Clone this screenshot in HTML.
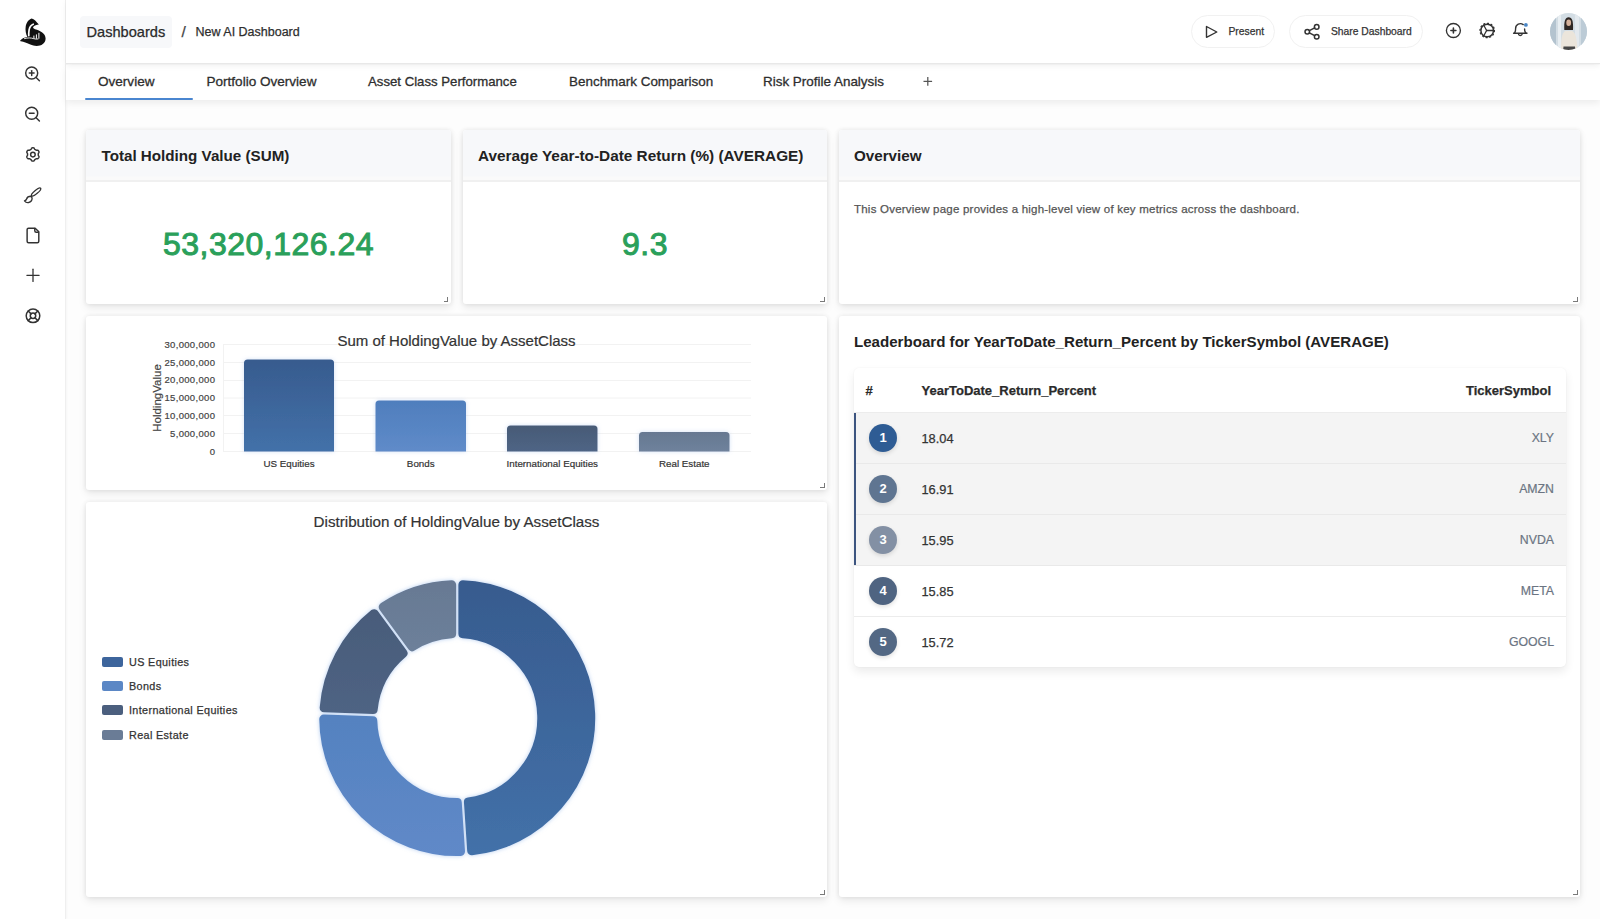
<!DOCTYPE html>
<html><head><meta charset="utf-8">
<style>
*{box-sizing:border-box;margin:0;padding:0}
html,body{width:1600px;height:919px;overflow:hidden;background:#fdfdfd;font-family:"Liberation Sans",sans-serif;color:#2a2a2a}
.abs{position:absolute}
#side{position:absolute;left:0;top:0;width:66px;height:919px;background:#fff;border-right:1px solid #efefef;box-shadow:1px 0 2px rgba(0,0,0,0.03)}
#hdr{position:absolute;left:66px;top:0;width:1534px;height:64px;background:#fff;border-bottom:1px solid #e8e8e8;box-shadow:0 2px 6px rgba(0,0,0,0.06);z-index:2}
#tabs{position:absolute;left:66px;top:65px;width:1534px;height:35px;background:#fff;box-shadow:0 3px 7px rgba(0,0,0,0.07);z-index:1}
.tab{position:absolute;top:74px;font-size:13.55px;color:#2e2e2e;-webkit-text-stroke:0.3px #2e2e2e;white-space:nowrap;line-height:16px}
.card{position:absolute;background:#fff;border-radius:3px;box-shadow:0 4px 8px rgba(0,0,0,0.08),0 0 5px rgba(0,0,0,0.09)}
.chd{position:absolute;left:0;top:0;right:0;height:52px;background:linear-gradient(#f7f8fa 0,#f7f8fa 46px,#fafafa 47px,#fafafa 49.5px,#f0f0f0 50.5px,#f0f0f0 51.5px,#fff 52px);border-radius:3px 3px 0 0}
.ctitle{position:absolute;font-weight:bold;font-size:15.2px;color:#222;white-space:nowrap;line-height:18px}
.big{position:absolute;font-weight:normal;-webkit-text-stroke:1px #2aa05a;font-size:32px;letter-spacing:0.5px;text-indent:0.5px;color:#2aa05a;white-space:nowrap;line-height:36px;text-align:center}
.rh{position:absolute;width:4.5px;height:4.5px;border-right:1.1px solid #7a7a7a;border-bottom:1.1px solid #7a7a7a}
.txt{position:absolute;white-space:nowrap;-webkit-text-stroke:0.25px currentColor}
.lbc{position:absolute;left:869px;width:28px;height:28px;border-radius:50%;color:#fff;font-weight:bold;font-size:13px;line-height:28px;text-align:center;box-shadow:0 2px 4px rgba(0,0,0,0.12)}
.lbv{position:absolute;left:921.5px;font-size:12.8px;line-height:15px;color:#333;white-space:nowrap;-webkit-text-stroke:0.25px #333}
.lbt{position:absolute;right:46px;font-size:12.3px;line-height:15px;color:#6b7482;white-space:nowrap;text-align:right;-webkit-text-stroke:0.2px #6b7482}
body > div:not(#hdr):not(#tabs):not(#side){z-index:4}
</style></head><body>
<div id="side"></div>
<div id="hdr"></div>
<div id="tabs"></div>
<div class="abs" style="left:85px;top:98px;width:108px;height:2px;background:#4a86d0;border-radius:1px"></div>

<!-- header breadcrumb -->
<div class="abs" style="left:80px;top:16px;width:92px;height:32px;background:#f7f8fa;border-radius:4px"></div>
<div class="txt" style="left:86.5px;top:24px;font-size:14.6px;line-height:17px;color:#2a2a2a">Dashboards</div>
<div class="txt" style="left:181.5px;top:23px;font-size:15.5px;line-height:18px;color:#444">/</div>
<div class="txt" style="left:195.5px;top:24px;font-size:12.5px;line-height:16px;color:#2e2e2e">New AI Dashboard</div>

<!-- tabs -->
<div class="tab" style="left:98px">Overview</div>
<div class="tab" style="left:206.5px">Portfolio Overview</div>
<div class="tab" style="left:368px;font-size:13.2px">Asset Class Performance</div>
<div class="tab" style="left:569px;font-size:13.45px">Benchmark Comparison</div>
<div class="tab" style="left:763px;font-size:13.45px">Risk Profile Analysis</div>
<svg class="abs" style="left:920px;top:74px;z-index:5" width="16" height="16"><g stroke="#555" stroke-width="1.25"><line x1="3.5" y1="7.4" x2="12.1" y2="7.4"/><line x1="7.8" y1="3.1" x2="7.8" y2="11.7"/></g></svg>

<!-- header buttons -->
<div class="abs" style="left:1191px;top:15px;width:84px;height:33px;border:1px solid #f1f1f1;border-radius:17px;background:#fff"></div>
<div class="txt" style="left:1228.5px;top:25px;font-size:10.3px;line-height:13px;color:#333">Present</div>
<div class="abs" style="left:1289px;top:15px;width:134px;height:33px;border:1px solid #f1f1f1;border-radius:17px;background:#fff"></div>
<div class="txt" style="left:1331px;top:25px;font-size:10.3px;line-height:13px;color:#333">Share Dashboard</div>

<!-- Row 1 cards -->
<div class="card" style="left:86px;top:130px;width:364.5px;height:174px">
  <div class="chd"></div>
</div>
<div class="ctitle" style="left:101.5px;top:147px">Total Holding Value (SUM)</div>
<div class="big" style="left:86px;top:226px;width:364.5px">53,320,126.24</div>

<div class="card" style="left:462.5px;top:130px;width:364.5px;height:174px">
  <div class="chd"></div>
</div>
<div class="ctitle" style="left:478px;top:147px;font-size:15.35px">Average Year-to-Date Return (%) (AVERAGE)</div>
<div class="big" style="left:462.5px;top:226px;width:364.5px">9.3</div>

<div class="card" style="left:839px;top:130px;width:741px;height:174px">
  <div class="chd"></div>
</div>
<div class="ctitle" style="left:854px;top:147px">Overview</div>
<div class="txt" style="left:854px;top:202px;font-size:11.5px;letter-spacing:0.22px;line-height:14px;color:#555">This Overview page provides a high-level view of key metrics across the dashboard.</div>

<!-- Row 2 -->
<div class="card" style="left:86px;top:316px;width:741px;height:174px"></div>
<div class="card" style="left:839px;top:316px;width:741px;height:581px"></div>
<div class="card" style="left:86px;top:502px;width:741px;height:395px"></div>

<div class="rh" style="left:443.5px;top:297px"></div>
<div class="rh" style="left:820px;top:297px"></div>
<div class="rh" style="left:1573px;top:297px"></div>
<div class="rh" style="left:820px;top:483px"></div>
<div class="rh" style="left:820px;top:890px"></div>
<div class="rh" style="left:1573px;top:890px"></div>
<!-- ===== Leaderboard ===== -->
<div class="ctitle" style="left:854px;top:332.5px;font-size:15.1px">Leaderboard for YearToDate_Return_Percent by TickerSymbol (AVERAGE)</div>
<div class="abs" style="left:854px;top:368px;width:712px;height:299px;background:#fff;border-radius:5px;box-shadow:0 5px 10px rgba(0,0,0,0.08),0 0 2px rgba(0,0,0,0.06)"></div>
<div class="abs" style="left:854px;top:412px;width:712px;height:1px;background:#ececec"></div>
<div class="abs" style="left:854px;top:413px;width:712px;height:50px;background:#f4f4f4"></div>
<div class="abs" style="left:854px;top:463px;width:712px;height:1px;background:#e9e9e9"></div>
<div class="abs" style="left:854px;top:464px;width:712px;height:50px;background:#f4f4f4"></div>
<div class="abs" style="left:854px;top:514px;width:712px;height:1px;background:#e9e9e9"></div>
<div class="abs" style="left:854px;top:515px;width:712px;height:50px;background:#f4f4f4"></div>
<div class="abs" style="left:854px;top:565px;width:712px;height:1px;background:#e9e9e9"></div>
<div class="abs" style="left:854px;top:616px;width:712px;height:1px;background:#ececec"></div>
<div class="abs" style="left:854px;top:413px;width:2px;height:152px;background:#3d5580"></div>
<div class="txt" style="left:865.5px;top:383px;font-size:13px;font-weight:bold;line-height:15px;color:#2a2a2a">#</div>
<div class="txt" style="left:921.5px;top:383px;font-size:13px;font-weight:bold;line-height:15px;color:#2a2a2a">YearToDate_Return_Percent</div>
<div class="txt" style="left:1466px;top:383px;font-size:13px;font-weight:bold;line-height:15px;color:#2a2a2a">TickerSymbol</div>
<div class="lbc" style="top:424px;background:#2e5c94">1</div>
<div class="lbc" style="top:475px;background:#5f7591">2</div>
<div class="lbc" style="top:526px;background:#8390a4">3</div>
<div class="lbc" style="top:577px;background:#4f6481">4</div>
<div class="lbc" style="top:628px;background:#536884">5</div>
<div class="lbv" style="top:431px">18.04</div>
<div class="lbv" style="top:482px">16.91</div>
<div class="lbv" style="top:533px">15.95</div>
<div class="lbv" style="top:584px">15.85</div>
<div class="lbv" style="top:635px">15.72</div>
<div class="lbt" style="top:431px">XLY</div>
<div class="lbt" style="top:482px">AMZN</div>
<div class="lbt" style="top:533px">NVDA</div>
<div class="lbt" style="top:584px">META</div>
<div class="lbt" style="top:635px">GOOGL</div>

<svg class="abs" style="left:0;top:0;z-index:5" width="1600" height="919" viewBox="0 0 1600 919" font-family="Liberation Sans, sans-serif">
<defs>
  <linearGradient id="bUS" x1="0" y1="0" x2="0" y2="1"><stop offset="0" stop-color="#375b8e"/><stop offset="1" stop-color="#4371a9"/></linearGradient>
  <linearGradient id="bBo" x1="0" y1="0" x2="0" y2="1"><stop offset="0" stop-color="#4f7ebd"/><stop offset="1" stop-color="#5f8bc9"/></linearGradient>
  <linearGradient id="bIn" x1="0" y1="0" x2="0" y2="1"><stop offset="0" stop-color="#475a76"/><stop offset="1" stop-color="#4f6585"/></linearGradient>
  <linearGradient id="bRe" x1="0" y1="0" x2="0" y2="1"><stop offset="0" stop-color="#667891"/><stop offset="1" stop-color="#6f829c"/></linearGradient>
  <linearGradient id="gUS" gradientUnits="userSpaceOnUse" x1="457" y1="580" x2="457" y2="856"><stop offset="0" stop-color="#375b8e"/><stop offset="1" stop-color="#4371a9"/></linearGradient>
  <linearGradient id="gIn" gradientUnits="userSpaceOnUse" x1="457" y1="600" x2="457" y2="720"><stop offset="0" stop-color="#485b79"/><stop offset="1" stop-color="#4f6484"/></linearGradient>
  <linearGradient id="gRe" gradientUnits="userSpaceOnUse" x1="457" y1="580" x2="457" y2="650"><stop offset="0" stop-color="#677993"/><stop offset="1" stop-color="#6d809a"/></linearGradient>
  <linearGradient id="gBo" gradientUnits="userSpaceOnUse" x1="457" y1="718" x2="457" y2="856"><stop offset="0" stop-color="#5482c0"/><stop offset="1" stop-color="#6089c8"/></linearGradient>
  <filter id="glow" x="-20%" y="-20%" width="140%" height="140%"><feDropShadow dx="0" dy="0" stdDeviation="2.2" flood-color="#86aee6" flood-opacity="0.6"/></filter>
  <filter id="bglow" x="-20%" y="-20%" width="140%" height="140%"><feDropShadow dx="0" dy="0" stdDeviation="2" flood-color="#8fb0e6" flood-opacity="0.4"/></filter>
  <filter id="cshadow" x="-50%" y="-50%" width="200%" height="200%"><feDropShadow dx="0" dy="1" stdDeviation="1.5" flood-color="#000" flood-opacity="0.18"/></filter>
  <clipPath id="avc"><circle cx="1568.5" cy="31.5" r="18.5"/></clipPath>
</defs>

<!-- ===== Bar chart ===== -->
<g stroke="#f2f2f2" stroke-width="1">
  <line x1="223" y1="344.5" x2="751" y2="344.5"/>
  <line x1="223" y1="362.5" x2="751" y2="362.5"/>
  <line x1="223" y1="380.5" x2="751" y2="380.5"/>
  <line x1="223" y1="398" x2="751" y2="398"/>
  <line x1="223" y1="415.5" x2="751" y2="415.5"/>
  <line x1="223" y1="433.5" x2="751" y2="433.5"/>
  <line x1="223" y1="451.5" x2="751" y2="451.5"/>
  <line x1="223.5" y1="344" x2="223.5" y2="452"/>
</g>
<text x="456.5" y="345.6" font-size="15" text-anchor="middle" fill="#333" stroke="#333" stroke-width="0.2">Sum of HoldingValue by AssetClass</text>
<g font-size="9.5" fill="#444" text-anchor="end" letter-spacing="0.33" stroke="#444" stroke-width="0.2">
  <text x="215.3" y="347.8">30,000,000</text>
  <text x="215.3" y="365.6">25,000,000</text>
  <text x="215.3" y="383.4">20,000,000</text>
  <text x="215.3" y="401.2">15,000,000</text>
  <text x="215.3" y="419">10,000,000</text>
  <text x="215.3" y="436.8">5,000,000</text>
  <text x="215.3" y="454.6">0</text>
</g>
<text transform="translate(160.8,398) rotate(-90)" font-size="11.5" text-anchor="middle" fill="#444" stroke="#444" stroke-width="0.2">HoldingValue</text>
<g filter="url(#bglow)">
  <path d="M244 451.5 V363 a3.5 3.5 0 0 1 3.5 -3.5 H330.5 a3.5 3.5 0 0 1 3.5 3.5 V451.5 Z" fill="url(#bUS)"/>
  <path d="M375.5 451.5 V404 a3.5 3.5 0 0 1 3.5 -3.5 H462.5 a3.5 3.5 0 0 1 3.5 3.5 V451.5 Z" fill="url(#bBo)"/>
  <path d="M507 451.5 V429 a3.5 3.5 0 0 1 3.5 -3.5 H594 a3.5 3.5 0 0 1 3.5 3.5 V451.5 Z" fill="url(#bIn)"/>
  <path d="M639 451.5 V435.5 a3.5 3.5 0 0 1 3.5 -3.5 H726 a3.5 3.5 0 0 1 3.5 3.5 V451.5 Z" fill="url(#bRe)"/>
</g>
<g font-size="9.8" fill="#333" text-anchor="middle" transform="translate(0,-1)" stroke="#333" stroke-width="0.2">
  <text x="289" y="467.5">US Equities</text>
  <text x="420.75" y="467.5">Bonds</text>
  <text x="552.25" y="467.5">International Equities</text>
  <text x="684.25" y="467.5">Real Estate</text>
</g>

<!-- ===== Donut ===== -->
<text x="456.5" y="526.5" font-size="15.2" text-anchor="middle" fill="#333" stroke="#333" stroke-width="0.2">Distribution of HoldingValue by AssetClass</text>
<g filter="url(#glow)">
<path d="M462.85 584.72 A133.50 133.50 0 0 1 471.68 850.82 L468.42 801.86 A84.50 84.50 0 0 0 462.85 633.79 Z" fill="url(#gUS)" stroke="url(#gUS)" stroke-width="9" stroke-linejoin="round"/>
<path d="M460.50 851.56 A133.50 133.50 0 0 1 323.75 719.04 L372.79 720.75 A84.50 84.50 0 0 0 457.25 802.60 Z" fill="url(#gBo)" stroke="url(#gBo)" stroke-width="9" stroke-linejoin="round"/>
<path d="M324.14 707.85 A133.50 133.50 0 0 1 374.14 613.63 L403.05 653.27 A84.50 84.50 0 0 0 373.18 709.56 Z" fill="url(#gIn)" stroke="url(#gIn)" stroke-width="9" stroke-linejoin="round"/>
<path d="M383.18 607.03 A133.50 133.50 0 0 1 451.65 584.72 L451.65 633.79 A84.50 84.50 0 0 0 412.09 646.68 Z" fill="url(#gRe)" stroke="url(#gRe)" stroke-width="9" stroke-linejoin="round"/>
</g>
<g>
  <rect x="102" y="657" width="21" height="10" rx="2" fill="#3d659c"/>
  <rect x="102" y="681" width="21" height="10" rx="2" fill="#5b87c5"/>
  <rect x="102" y="705" width="21" height="10" rx="2" fill="#4b5f7e"/>
  <rect x="102" y="730" width="21" height="10" rx="2" fill="#6a7c96"/>
</g>
<g font-size="10.8" fill="#333" letter-spacing="0.36" stroke="#333" stroke-width="0.25">
  <text x="129" y="666">US Equities</text>
  <text x="129" y="690">Bonds</text>
  <text x="129" y="714.3">International Equities</text>
  <text x="129" y="738.5">Real Estate</text>
</g>
</svg>

<!-- ===== Icons ===== -->
<svg class="abs" style="left:0;top:0;z-index:5" width="1600" height="919" viewBox="0 0 1600 919">
<defs><clipPath id="avc"><circle cx="1568.5" cy="31.7" r="18.5"/></clipPath>
<linearGradient id="avbg" x1="0" y1="0" x2="1" y2="0"><stop offset="0" stop-color="#a9bccb"/><stop offset="0.5" stop-color="#dfe7ee"/><stop offset="1" stop-color="#b4c6d4"/></linearGradient></defs>
<!-- logo -->
<g>
<path d="M31.7 18.4 C34.2 18.6 36.2 21.6 38.9 24.6 C36.6 24.9 34.6 25.4 33.6 26.6 C32.6 27.6 33.1 28.6 35 29.2 C40.2 30.6 45.6 33.2 45.6 38.6 C45.6 43.6 41.2 46 36.6 46 C32.2 46 28.2 43.2 24.6 42.2 C22.6 41.6 21.2 41.6 19.9 41.1 C21.6 38.9 24 37.5 27.4 37.1 C25.9 34 25.1 30 25.7 26.5 C26.2 23 28.4 19.4 31.7 18.4 Z" fill="#111"/>
<path d="M33.2 24.2 C31 25 29.6 27.2 29.1 29.8 C28.7 32 28.7 33.8 28.8 35.6" stroke="#fff" stroke-width="1.7" fill="none" stroke-linecap="round"/>
<path d="M24.5 38.6 C28 37.6 31 37.8 33.5 38.6 C35 39.1 36.5 39.2 38 39" stroke="#fff" stroke-width="0.9" fill="none" stroke-linecap="round"/>
<g stroke="#fff" stroke-width="1" stroke-linecap="round"><line x1="36.4" y1="34.8" x2="36.4" y2="38.3"/><line x1="38.9" y1="33.2" x2="38.9" y2="38.3"/><line x1="33.9" y1="36" x2="33.9" y2="38.2"/></g>
</g>
<g fill="none" stroke="#333" stroke-width="1.45" stroke-linecap="round" stroke-linejoin="round">
  <!-- zoom in -->
  <circle cx="31.7" cy="73" r="6"/><line x1="36.1" y1="77.4" x2="39.4" y2="80.7"/><line x1="31.7" y1="70.6" x2="31.7" y2="75.4"/><line x1="29.3" y1="73" x2="34.1" y2="73"/>
  <!-- zoom out -->
  <circle cx="31.7" cy="113.3" r="6"/><line x1="36.1" y1="117.7" x2="39.4" y2="121"/><line x1="29.3" y1="113.3" x2="34.1" y2="113.3"/>
  <!-- gear -->
  <path d="M32.90 147.80 L33.13 147.81 L33.36 147.83 L33.59 147.87 L33.81 147.94 L34.03 148.06 L34.22 148.24 L34.38 148.50 L34.52 148.81 L34.65 149.07 L34.78 149.27 L34.93 149.42 L35.09 149.53 L35.25 149.63 L35.41 149.72 L35.57 149.82 L35.74 149.91 L35.90 150.00 L36.06 150.09 L36.24 150.17 L36.44 150.23 L36.68 150.25 L36.98 150.23 L37.31 150.19 L37.62 150.20 L37.87 150.28 L38.08 150.40 L38.25 150.56 L38.40 150.74 L38.54 150.93 L38.66 151.12 L38.77 151.33 L38.87 151.54 L38.94 151.76 L38.99 151.99 L39.00 152.23 L38.94 152.49 L38.79 152.76 L38.60 153.03 L38.43 153.27 L38.32 153.49 L38.27 153.69 L38.25 153.89 L38.25 154.08 L38.25 154.26 L38.25 154.45 L38.25 154.64 L38.25 154.82 L38.25 155.01 L38.27 155.21 L38.32 155.41 L38.43 155.63 L38.60 155.87 L38.79 156.14 L38.94 156.41 L39.00 156.67 L38.99 156.91 L38.94 157.14 L38.87 157.36 L38.77 157.57 L38.66 157.77 L38.54 157.97 L38.40 158.16 L38.25 158.34 L38.08 158.50 L37.87 158.62 L37.62 158.70 L37.31 158.71 L36.98 158.67 L36.68 158.65 L36.44 158.67 L36.24 158.73 L36.06 158.81 L35.90 158.90 L35.74 158.99 L35.57 159.08 L35.41 159.18 L35.25 159.27 L35.09 159.37 L34.93 159.48 L34.78 159.63 L34.65 159.83 L34.52 160.09 L34.38 160.40 L34.22 160.66 L34.03 160.84 L33.81 160.96 L33.59 161.03 L33.36 161.07 L33.13 161.09 L32.90 161.10 L32.67 161.09 L32.44 161.07 L32.21 161.03 L31.99 160.96 L31.77 160.84 L31.58 160.66 L31.42 160.40 L31.28 160.09 L31.15 159.83 L31.02 159.63 L30.87 159.48 L30.71 159.37 L30.55 159.27 L30.39 159.18 L30.22 159.08 L30.06 158.99 L29.90 158.90 L29.74 158.81 L29.56 158.73 L29.36 158.67 L29.12 158.65 L28.82 158.67 L28.49 158.71 L28.18 158.70 L27.93 158.62 L27.72 158.50 L27.55 158.34 L27.40 158.16 L27.26 157.97 L27.14 157.78 L27.03 157.57 L26.93 157.36 L26.86 157.14 L26.81 156.91 L26.80 156.67 L26.86 156.41 L27.01 156.14 L27.20 155.87 L27.37 155.63 L27.48 155.41 L27.53 155.21 L27.55 155.01 L27.55 154.82 L27.55 154.64 L27.55 154.45 L27.55 154.26 L27.55 154.08 L27.55 153.89 L27.53 153.69 L27.48 153.49 L27.37 153.27 L27.20 153.03 L27.01 152.76 L26.86 152.49 L26.80 152.23 L26.81 151.99 L26.86 151.76 L26.93 151.54 L27.03 151.33 L27.14 151.12 L27.26 150.93 L27.40 150.74 L27.55 150.56 L27.72 150.40 L27.93 150.28 L28.18 150.20 L28.49 150.19 L28.82 150.23 L29.12 150.25 L29.36 150.23 L29.56 150.17 L29.74 150.09 L29.90 150.00 L30.06 149.91 L30.22 149.82 L30.39 149.72 L30.55 149.63 L30.71 149.53 L30.87 149.42 L31.02 149.27 L31.15 149.07 L31.28 148.81 L31.42 148.50 L31.58 148.24 L31.77 148.06 L31.99 147.94 L32.21 147.87 L32.44 147.83 L32.67 147.81 Z" stroke-width="1.45"/>
  <circle cx="32.9" cy="154.6" r="2.3" stroke-width="1.45"/>
  <!-- brush -->
  <ellipse cx="36.1" cy="192" rx="5.9" ry="1.7" transform="rotate(-40 36.1 192)" stroke-width="1.35"/>
  <path d="M31.4 196.3 C29.2 196.2 27.1 197.2 26.6 199 C26.3 200 25.6 200.5 24.5 200.8 C25.6 202.3 27.1 202.8 28.6 202.5 C30.6 202 32.1 200.1 32.1 198.3 Z" stroke-width="1.35"/>
  <!-- file -->
  <g transform="translate(24.2,226.7) scale(0.73)" stroke-width="2">
    <path d="M15 2H6a2 2 0 0 0-2 2v16a2 2 0 0 0 2 2h12a2 2 0 0 0 2-2V7Z"/>
    <path d="M14.5 2.5v3a2 2 0 0 0 2 2h3"/>
  </g>
  <!-- plus -->
  <line x1="26.9" y1="275.3" x2="39.1" y2="275.3" stroke-width="1.3"/><line x1="33" y1="269.2" x2="33" y2="281.4" stroke-width="1.3"/>
  <!-- lifebuoy -->
  <g transform="translate(24.84,307.64) scale(0.68)" stroke-width="2.2">
    <circle cx="12" cy="12" r="10"/><circle cx="12" cy="12" r="4"/>
    <path d="m4.93 4.93 4.24 4.24"/><path d="m14.83 9.17 4.24-4.24"/><path d="m14.83 14.83 4.24 4.24"/><path d="m9.17 14.83-4.24 4.24"/>
  </g>
  <!-- play -->
  <path d="M1206.5 26.5 L1216.8 32 L1206.5 37.3 Z" stroke-width="1.4"/>
  <!-- share -->
  <circle cx="1307.3" cy="31.8" r="2.3" stroke-width="1.5"/><circle cx="1316.7" cy="26.9" r="2.3" stroke-width="1.5"/><circle cx="1316.7" cy="36.7" r="2.3" stroke-width="1.5"/>
  <line x1="1309.3" y1="30.7" x2="1314.7" y2="27.9" stroke-width="1.5"/><line x1="1309.3" y1="32.9" x2="1314.7" y2="35.7" stroke-width="1.5"/>
  <!-- plus circle -->
  <circle cx="1453.4" cy="30.5" r="7" stroke-width="1.35"/><line x1="1450.9" y1="30.5" x2="1455.9" y2="30.5" stroke-width="1.6"/><line x1="1453.4" y1="28" x2="1453.4" y2="33" stroke-width="1.6"/>
  <!-- cog/chrome -->
  <circle cx="1487.2" cy="30.5" r="6.3" stroke-width="1.5"/>
  <circle cx="1487.2" cy="30.5" r="7.2" stroke-width="1.3" stroke-dasharray="1.1 2.67"/>
  <line x1="1486.6" y1="30.5" x2="1493.5" y2="30.5" stroke-width="1.3"/><line x1="1486.6" y1="30.5" x2="1483.8" y2="25.3" stroke-width="1.3"/><line x1="1486.6" y1="30.5" x2="1483.8" y2="35.7" stroke-width="1.3"/>
  <!-- bell -->
  <path d="M1515.6 28.5 a4.8 4.8 0 0 1 7.6 -3.9 M1524.6 29 c0 3 0.6 3.9 2.4 4.2 H1513.6 c1.5 -0.3 2 -1.3 2 -4.7" stroke-width="1.4"/>
  <path d="M1518.6 34.5 a1.9 1.9 0 0 0 3.4 0" stroke-width="1.4"/>
</g>
<circle cx="1525.9" cy="24.9" r="1.9" fill="#4a86c5"/>
<!-- avatar -->
<g clip-path="url(#avc)">
  <rect x="1548" y="11" width="42" height="42" fill="#d3dde4"/>
  <rect x="1548" y="11" width="8" height="42" fill="#b3c3cf"/>
  <rect x="1558" y="11" width="3" height="42" fill="#e8eef2"/>
  <rect x="1575" y="11" width="4" height="42" fill="#e3e9ee"/>
  <rect x="1581" y="11" width="9" height="42" fill="#bccbd6"/>
  <path d="M1564.3 30 C1563.8 21 1565.2 17.2 1568.6 17.2 C1572.2 17.2 1573.4 21 1573 30 Z" fill="#2e2724"/>
  <ellipse cx="1568.7" cy="22.8" rx="2.4" ry="3.2" fill="#d4b09a"/>
  <path d="M1561 52 C1560.8 41 1561.5 33 1565.2 31 L1572.2 31 C1576 33 1577.5 41 1577.2 52 Z" fill="#ebe5db"/>
  <path d="M1563 52 L1575.5 52 L1575 46.5 L1563.5 46.5 Z" fill="#474747"/>
</g>
</svg>

</body></html>
